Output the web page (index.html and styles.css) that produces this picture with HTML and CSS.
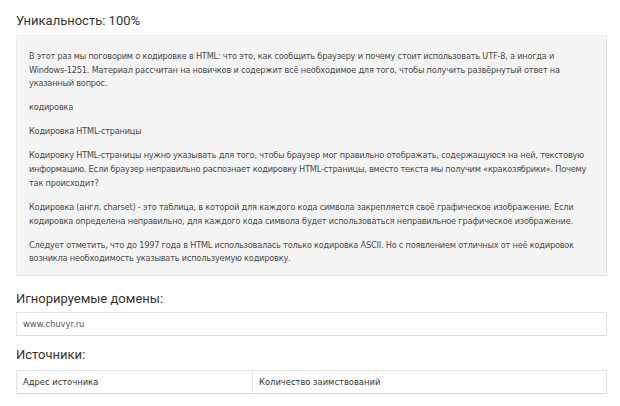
FILE: index.html
```html
<!DOCTYPE html>
<html lang="ru">
<head>
<meta charset="utf-8">
<link rel="stylesheet" href="styles.css">
</head>
<body>
<div class="page">
  <h2 class="title title-first">Уникальность: 100%</h2>
  <div class="textbox">
    <p>В этот раз мы поговорим о кодировке в HTML: что это, как сообщить браузеру и почему стоит использовать UTF-8, а иногда и Windows-1251. Материал рассчитан на новичков и содержит всё необходимое для того, чтобы получить развёрнутый ответ на указанный вопрос.</p>
    <p>кодировка</p>
    <p>Кодировка HTML-страницы</p>
    <p>Кодировку HTML-страницы нужно указывать для того, чтобы браузер мог правильно отображать, содержащуюся на ней, текстовую информацию. Если браузер неправильно распознает кодировку HTML-страницы, вместо текста мы получим «кракозябрики». Почему так происходит?</p>
    <p>Кодировка (англ. charset) - это таблица, в которой для каждого кода символа закрепляется своё графическое изображение. Если кодировка определена неправильно, для каждого кода символа будет использоваться неправильное графическое изображение.</p>
    <p>Следует отметить, что до 1997 года в HTML использовалась только кодировка ASCII. Но с появлением отличных от неё кодировок возникла необходимость указывать используемую кодировку.</p>
  </div>
  <h2 class="title title-domains">Игнорируемые домены:</h2>
  <div class="field">www.chuvyr.ru</div>
  <h2 class="title title-sources">Источники:</h2>
  <div class="table">
    <div class="cell cell-addr">Адрес источника</div>
    <div class="cell">Количество заимствований</div>
  </div>
</div>
</body>
</html>
```
FILE: styles.css
```css
html, body {
  margin: 0;
  padding: 0;
  background: #ffffff;
}
.page {
  padding: 11px 13px 0 16px;
  font-family: "DejaVu Sans Condensed", "DejaVu Sans", sans-serif;
  color: #4a4a4a;
}
.title {
  margin: 0;
  font-family: Roboto, "Noto Sans", sans-serif;
  font-weight: 400;
  font-size: 13px;
  line-height: 20px;
  color: #333333;
}
.title-first { margin-bottom: 4px; }
.title-domains { margin-top: 13px; margin-bottom: 3px; }
.title-sources { margin-top: 9px; margin-bottom: 5px; }
.textbox {
  background: #f4f4f4;
  border: 1px solid #ececec;
  border-right-color: #e2e2e2;
  border-bottom-color: #e0e0e0;
  padding: 14px 15px 9px 12px;
  font-size: 9.1px;
  letter-spacing: -0.2px;
  line-height: 13.7px;
}
.textbox p {
  margin: 0 0 10.3px 0;
}
.textbox p:last-child { margin-bottom: 0; }
.field {
  height: 22px;
  line-height: 22px;
  border: 1px solid #e6e6e6;
  border-bottom-color: #dcdcdc;
  background: #fff;
  padding: 0 6px;
  font-size: 9.3px;
  color: #555;
}
.table {
  display: grid;
  grid-template-columns: 236px 1fr;
  border: 1px solid #e3e3e3;
  border-bottom-color: #d6d6d6;
  height: 22px;
}
.cell {
  padding: 0 6px;
  line-height: 22px;
  font-size: 9.3px;
  color: #333;
}
.cell-addr {
  border-right: 1px solid #e3e3e3;
}
```
